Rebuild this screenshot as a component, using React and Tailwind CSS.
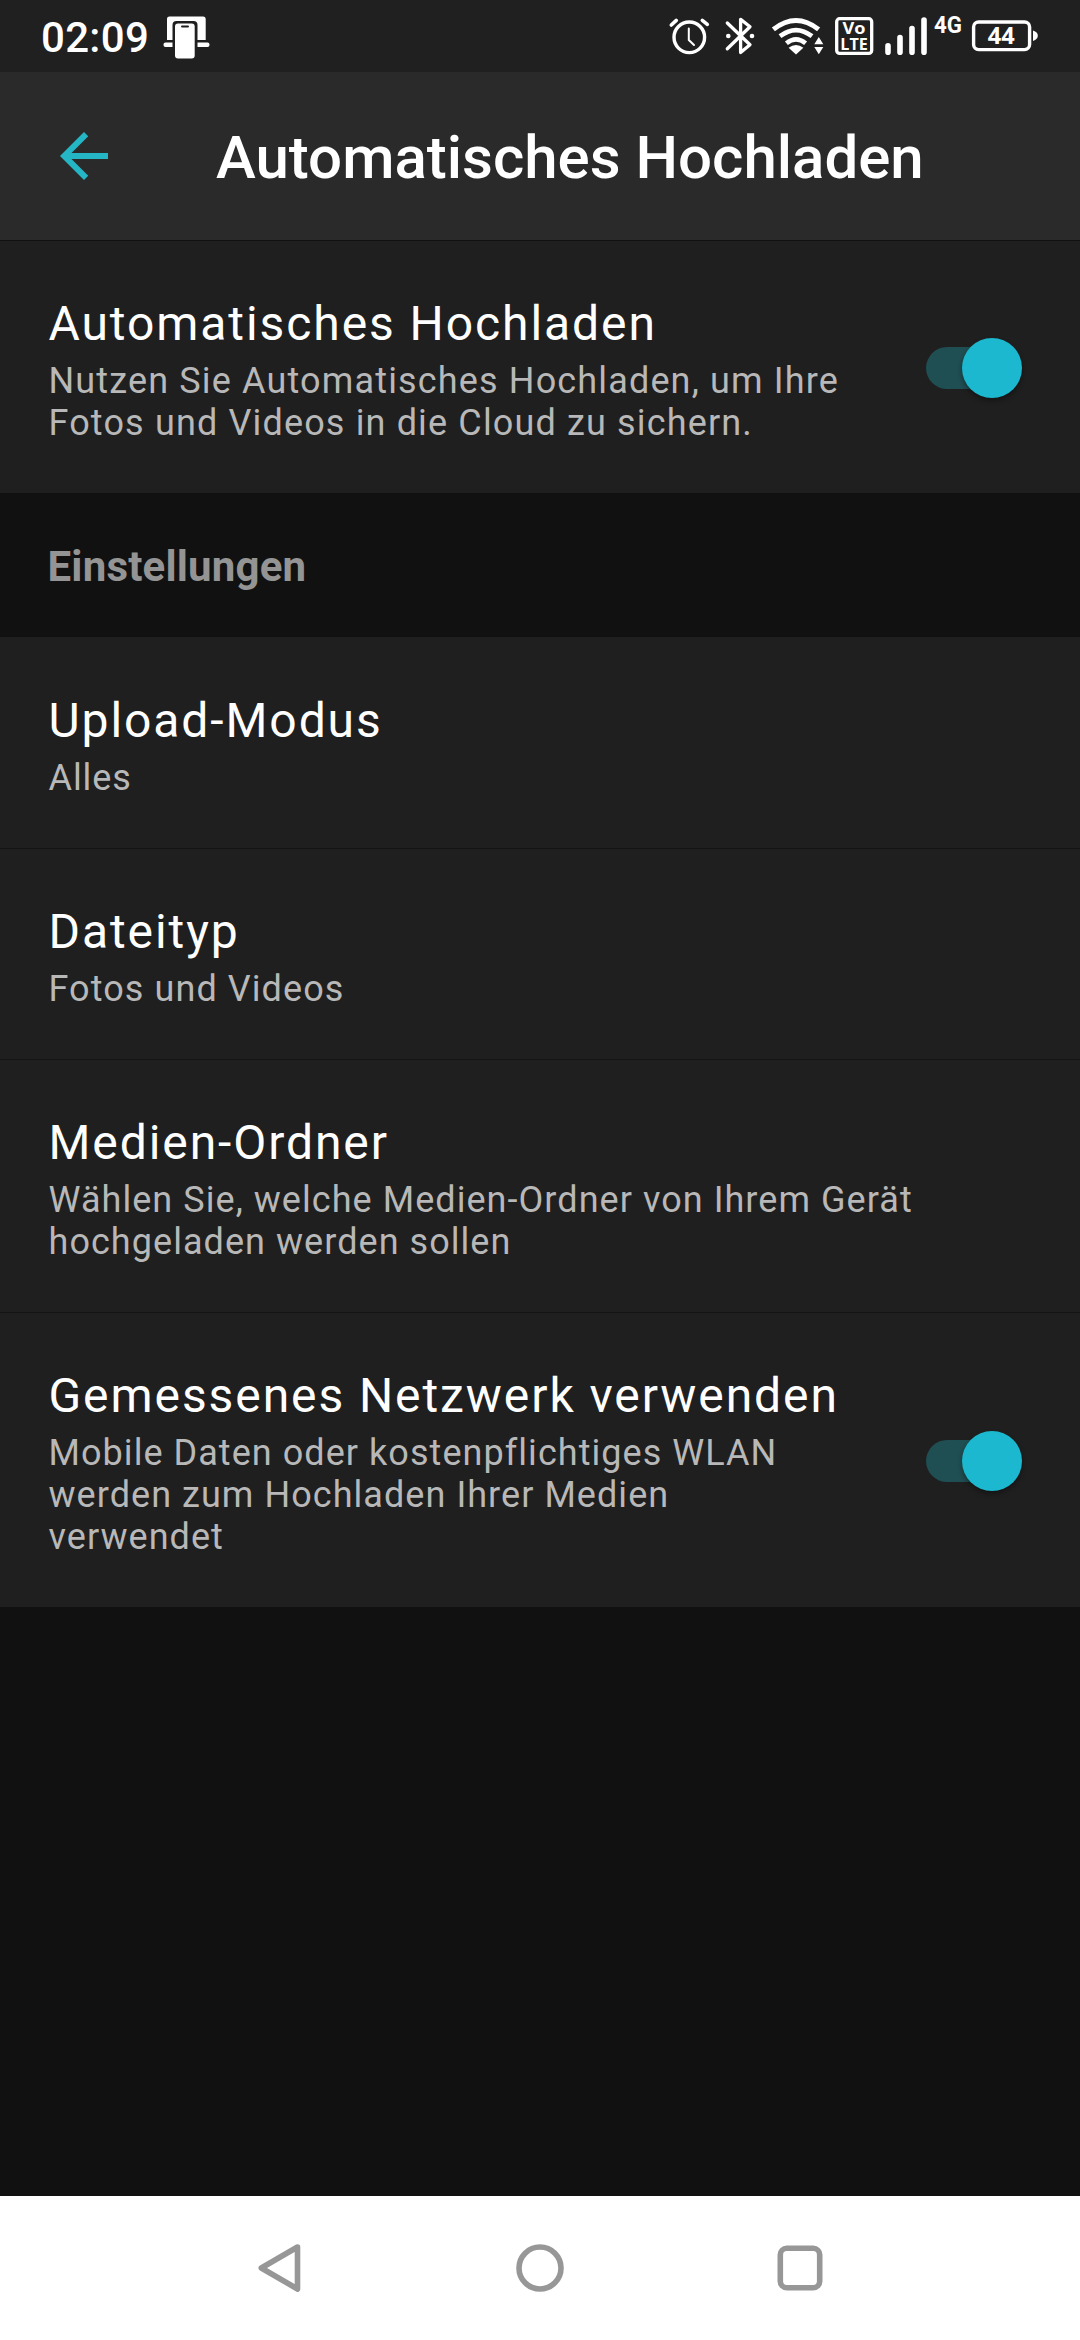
import React from "react";

function CarModeIcon() {
  return (
    <svg className="ml-[13px] h-[72px] w-[48px]" viewBox="162 0 48 72">
      <path d="M170 16.5H203a2.7 2.7 0 0 1 2.7 2.7V40H167V19.2a2.7 2.7 0 0 1 3-2.7z" fill="#fff" />
      <rect x="163.5" y="42.5" width="46" height="4.5" rx="2" fill="#fff" />
      <rect x="172.5" y="21" width="25" height="40" rx="4" fill="#202020" />
      <rect x="175" y="23.5" width="19.7" height="35" rx="3" fill="#fff" />
      <rect x="181" y="25.6" width="8" height="2" rx="1" fill="#202020" />
    </svg>
  );
}

function StatusIcons() {
  return (
    <svg className="ml-auto h-[72px] w-[420px]" viewBox="660 0 420 72" fill="none" stroke="#fff" strokeLinecap="round" strokeLinejoin="round">
      {/* alarm */}
      <circle cx="689.3" cy="37.3" r="15.3" strokeWidth="3.4" />
      <path d="M671.3 25l5-4.6M702.3 20.4l5 4" strokeWidth="3.6" />
      <path d="M688.8 28.5V40l5.2 5" strokeWidth="2" />
      {/* bluetooth */}
      <path d="M727.3 23L750 44.7L740.6 52.5V19.3L750 26.8L727.3 48.8" strokeWidth="3.3" />
      <circle cx="728.3" cy="36" r="2.3" fill="#fff" stroke="none" />
      <circle cx="752" cy="36" r="2.3" fill="#fff" stroke="none" />
      {/* wifi */}
      <g strokeLinecap="butt">
        <path d="M773.4 29.4Q796 11.6 818.6 29.4" strokeWidth="5" />
        <path d="M780 36.2Q796 24 812 36.2" strokeWidth="4.6" />
        <path d="M786.4 43.3Q796 35.4 805.6 43.3" strokeWidth="4.6" />
      </g>
      <path d="M788.6 47.8Q796 42.4 803.4 47.8L796 54.6z" fill="#fff" stroke="none" />
      <path d="M818.8 37L823.3 44.3H814.3zM818.8 54.3L814.3 47H823.3z" fill="#fff" stroke="none" />
      {/* volte */}
      <rect x="836.7" y="18.7" width="35" height="34.7" rx="3" strokeWidth="3.3" />
      <g fill="#fff" stroke="none" fontFamily="Open Sans, sans-serif" fontWeight="700">
        <text x="842.5" y="34" fontSize="16.5" textLength="23" lengthAdjust="spacingAndGlyphs">Vo</text>
        <text x="840.3" y="50" fontSize="16.5" textLength="27.5" lengthAdjust="spacingAndGlyphs">LTE</text>
      </g>
      {/* signal */}
      <path d="M888 45.8V52.2M900 37.5V52.2M912 28.5V52.2M924 20V52.2" strokeWidth="5.6" />
      <text x="934" y="32.6" fontSize="24.5" fontFamily="Roboto, sans-serif" fontWeight="700" fill="#fff" stroke="none" textLength="28" lengthAdjust="spacingAndGlyphs">4G</text>
      {/* battery */}
      <rect x="973.6" y="22" width="56" height="27.6" rx="5" strokeWidth="3.4" />
      <path d="M1033 30.5q4.8 1.6 4.8 5.2t-4.8 5.2z" fill="#fff" stroke="none" />
      <text x="1001.2" y="43.7" textAnchor="middle" fontSize="23.5" fontFamily="Open Sans, sans-serif" fontWeight="700" fill="#fff" stroke="none">44</text>
    </svg>
  );
}

function Toggle() {
  return (
    <div role="switch" aria-checked="true" className="relative mt-px flex h-[60px] w-[96px] shrink-0 items-center">
      <div className="h-[42px] w-[88px] rounded-full bg-[#1f4e53]" />
      <div className="absolute top-0 right-0 size-[60px] rounded-full bg-[#1bb8cf] shadow-[0_3px_5px_rgba(0,0,0,0.35)]" />
    </div>
  );
}

function Row({ title, lines, toggle, height, divider, tracking }) {
  return (
    <section className={`flex shrink-0 border-t bg-[#1f1f1f] pr-[58px] pl-[48.5px] ${height} ${divider}`}>
      <div className="flex-1 pt-[55px]">
        <h2 className="text-[48px] leading-[56px] tracking-[1.92px] text-white">{title}</h2>
        <p className={`mt-[8px] text-[36px] leading-[42px] whitespace-nowrap text-[#b8b8b8] ${tracking}`}>
          {lines.map((line) => (
            <span key={line} className="block">{line}</span>
          ))}
        </p>
      </div>
      {toggle && (
        <div className="flex items-center">
          <Toggle />
        </div>
      )}
    </section>
  );
}

export default function App() {
  return (
    <div className="flex h-[2340px] w-[1080px] flex-col overflow-hidden bg-[#111111] font-[Roboto,sans-serif]">
      <div className="flex h-[72px] shrink-0 items-center bg-[#202020] pl-[41px]">
        <span className="pt-[3px] text-[42px] leading-[50px] font-medium tracking-[0.3px] text-white">02:09</span>
        <CarModeIcon />
        <StatusIcons />
      </div>

      <header className="flex h-[168px] shrink-0 items-center bg-[#2a2a2a] pl-[48px]">
        <svg className="size-[72px]" viewBox="0 0 24 24" fill="#25b6c6">
          <path d="M20 11H7.83l5.59-5.59L12 4l-8 8 8 8 1.41-1.41L7.83 13H20v-2z" />
        </svg>
        <h1 className="ml-[96px] pt-[4px] text-[60px] leading-[70px] font-medium text-white">Automatisches Hochladen</h1>
      </header>

      <Row
        title="Automatisches Hochladen"
        lines={["Nutzen Sie Automatisches Hochladen, um Ihre", "Fotos und Videos in die Cloud zu sichern."]}
        toggle
        height="h-[253px]"
        divider="border-[#111111]"
        tracking="tracking-[1.15px]"
      />
      <div className="flex h-[144px] shrink-0 items-center pt-[4px] pl-[47.5px]">
        <h3 className="text-[42px] leading-[50px] font-bold tracking-[0.2px] text-[#949494]">Einstellungen</h3>
      </div>
      <Row title="Upload-Modus" lines={["Alles"]} height="h-[211px]" divider="border-[#1f1f1f]" tracking="tracking-[0.9px]" />
      <Row title="Dateityp" lines={["Fotos und Videos"]} height="h-[211px]" divider="border-[#141414]" tracking="tracking-[1.08px]" />
      <Row
        title="Medien-Ordner"
        lines={["Wählen Sie, welche Medien-Ordner von Ihrem Gerät", "hochgeladen werden sollen"]}
        height="h-[253px]"
        divider="border-[#141414]"
        tracking="tracking-[1.05px]"
      />
      <Row
        title="Gemessenes Netzwerk verwenden"
        lines={["Mobile Daten oder kostenpflichtiges WLAN", "werden zum Hochladen Ihrer Medien", "verwendet"]}
        toggle
        height="h-[295px]"
        divider="border-[#141414]"
        tracking="tracking-[1.05px]"
      />

      <nav className="mt-auto flex h-[144px] shrink-0 items-center justify-center gap-[200px] bg-white">
        <svg className="size-[60px]" viewBox="0 0 60 60" fill="none" stroke="#979797" strokeWidth="5.6" strokeLinejoin="round">
          <path d="M47.5 9L11.3 30L47.5 51z" />
        </svg>
        <svg className="size-[60px]" viewBox="0 0 60 60" fill="none" stroke="#979797" strokeWidth="5.6">
          <circle cx="30" cy="30" r="21" />
        </svg>
        <svg className="size-[60px]" viewBox="0 0 60 60" fill="none" stroke="#979797" strokeWidth="5.6">
          <rect x="10.3" y="10.3" width="39.4" height="39.4" rx="6.5" />
        </svg>
      </nav>
    </div>
  );
}
